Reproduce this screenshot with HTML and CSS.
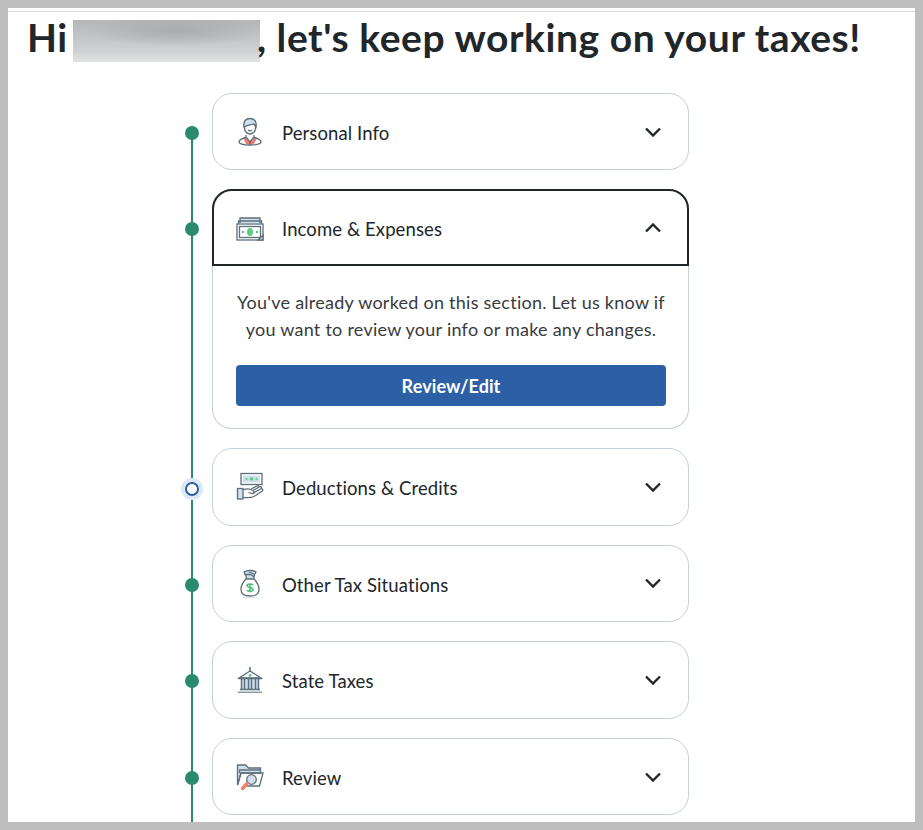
FILE: index.html
```html
<!DOCTYPE html>
<html lang="en">
<head>
  <meta charset="UTF-8" />
  <meta name="viewport" content="width=device-width, initial-scale=1.0"/>
  <title>Taxes</title>
  <link rel="stylesheet" href="styles.css">
</head>
<body>
  <div class="frame">
    <div class="page">

      <h1 class="greeting">Hi <span class="blurred-name"></span>, let's keep working on your taxes!</h1>

      <div class="steps">

        <!-- Personal Info -->
        <div class="step">
          <span class="dot"></span>
          <div class="card">
            <div class="card-head">
              <svg class="icon" viewBox="0 0 28 30">
                <path class="fill-coral" d="M9 20l5 5 5-5 2 1-3 6h-8l-3-6z"/>
                <path class="line" d="M8.500 8v3c0 3.500 2.500 6 5.500 6s5.500-2.500 5.500-6V8"/>
                <path class="fill-blue line" d="M8 10C7 4 10 1.500 14 1.500S21 4 20 10c-1-2-2-3-3-3-2 1-6 1-9 3z"/>
                <path class="line" d="M12 13c1 1 3 1 4 0M10 18v2l4 5 4-5v-2"/>
                <path class="line" d="M10 20.500c-4 1-7 3-7 4.500s4 3 11 3 11-1.500 11-3-3-3.500-7-4.500M14 25v3"/>
              </svg>
              <span class="label">Personal Info</span>
              <svg class="chevron" viewBox="0 0 18 10"><path d="M2 1.500l7 7 7-7"/></svg>
            </div>
          </div>
        </div>

        <!-- Income & Expenses, open -->
        <div class="step">
          <span class="dot"></span>
          <div class="card open">
            <div class="card-head">
              <svg class="icon" viewBox="0 0 28 30">
                <path class="fill-blue line" d="M4 10V5h20v5"/>
                <path class="line" d="M2.500 11V8h23v3"/>
                <rect class="line" x="1" y="11" width="26" height="16"/>
                <rect class="line" x="3.500" y="13.500" width="21" height="11"/>
                <ellipse class="fill-green" cx="14" cy="19" rx="3" ry="4"/>
                <circle class="fill-green" cx="7" cy="19" r="1.300"/>
                <circle class="fill-green" cx="21" cy="19" r="1.300"/>
                <path class="fill-blue line" d="M22 27l5-5v5z"/>
              </svg>
              <span class="label">Income &amp; Expenses</span>
              <svg class="chevron" viewBox="0 0 18 10"><path d="M2 8.500l7-7 7 7"/></svg>
            </div>
            <div class="card-body">
              <p>You've already worked on this section. Let us know if you want to review your info or make any changes.</p>
              <button class="review-btn">Review/Edit</button>
            </div>
          </div>
        </div>

        <!-- Deductions & Credits, current step -->
        <div class="step">
          <span class="dot current"></span>
          <div class="card">
            <div class="card-head">
              <svg class="icon" viewBox="0 0 28 30">
                <rect class="line" x="5" y="1.500" width="21" height="11"/>
                <rect class="fill-blue" x="7" y="3.500" width="17" height="7"/>
                <circle class="fill-green" cx="15.500" cy="7" r="1.800"/>
                <circle class="fill-green" cx="10.500" cy="7" r="1.100"/>
                <circle class="fill-green" cx="20.500" cy="7" r="1.100"/>
                <rect class="fill-blue line" x="1.500" y="16.500" width="5.500" height="10.500"/>
                <path class="line" d="M7 18c3-1.500 5-1.500 7.500-.5l3 1.500c1.500 1 .5 3-1.500 2.500l-3.500-1"/>
                <path class="line" d="M16.500 21.500l8-4.500c2-1 3 1 1.500 2.200L18 24.500c-3 1.500-6 1.500-11 .8"/>
                <path class="line" d="M17 18.500l6-3.500c1.500-1 3 0 2 1.500M15 17l6-3c1.500-.7 2.500.3 2 1"/>
              </svg>
              <span class="label">Deductions &amp; Credits</span>
              <svg class="chevron" viewBox="0 0 18 10"><path d="M2 1.500l7 7 7-7"/></svg>
            </div>
          </div>
        </div>

        <!-- Other Tax Situations -->
        <div class="step">
          <span class="dot"></span>
          <div class="card">
            <div class="card-head">
              <svg class="icon" viewBox="0 0 28 30">
                <path class="fill-blue line" d="M8 4c3-2 9-2 12 0l-2 4c-.5 1-.5 2 0 3h-8c.5-1 .5-2 0-3z"/>
                <path class="line" d="M8.500 6.500h6l4 2.500M13 4l5 2"/>
                <path class="line" d="M10 11c-3 3-5 6.500-5 10.500 0 4.500 3 6.500 9 6.500s9-2 9-6.500c0-4-2-7.500-5-10.500"/>
                <path class="fill-blue" d="M7 29h14v.8H7z"/>
                <path class="dollar" d="M17 17c-1-1.500-6-1.500-6 .5 0 2.500 6 1.500 6 4.300 0 2-5 2-6 .4M14 15.300v9"/>
              </svg>
              <span class="label">Other Tax Situations</span>
              <svg class="chevron" viewBox="0 0 18 10"><path d="M2 1.500l7 7 7-7"/></svg>
            </div>
          </div>
        </div>

        <!-- State Taxes -->
        <div class="step">
          <span class="dot"></span>
          <div class="card">
            <div class="card-head">
              <svg class="icon" viewBox="0 0 28 30">
                <path class="line thick" d="M14 2v5"/>
                <path class="line" d="M3 13L14 6l11 7z"/>
                <circle class="fill-green" cx="14" cy="10.500" r="1.400"/>
                <rect class="fill-blue" x="5" y="14" width="18" height="10"/>
                <path class="line thick" d="M5.500 14v10M8.500 14v10M12.500 14v10M15.500 14v10M19.500 14v10M22.500 14v10"/>
                <path class="line thick" d="M2.500 13.500h23M4 24.500h20"/>
                <path class="fill-slate" d="M2 26.500h24V28H2z"/>
              </svg>
              <span class="label">State Taxes</span>
              <svg class="chevron" viewBox="0 0 18 10"><path d="M2 1.500l7 7 7-7"/></svg>
            </div>
          </div>
        </div>

        <!-- Review -->
        <div class="step">
          <span class="dot"></span>
          <div class="card">
            <div class="card-head">
              <svg class="icon" viewBox="0 0 28 30">
                <path class="fill-blue line" d="M1.500 23V3h8l3 3h12v5H5z"/>
                <path class="line" d="M3.500 11V8h21"/>
                <path class="line" d="M1.500 23L5 11h22l-3.500 13H8"/>
                <circle class="fill-blue line" cx="15.500" cy="17.500" r="4.800"/>
                <path class="coral-line" d="M11 21.500L6.500 26.500"/>
              </svg>
              <span class="label">Review</span>
              <svg class="chevron" viewBox="0 0 18 10"><path d="M2 1.500l7 7 7-7"/></svg>
            </div>
          </div>
        </div>

      </div>
    </div>
  </div>
</body>
</html>
```

FILE: styles.css
```css
body {
  margin: 0;
  font-family: "Lato", "Liberation Sans", sans-serif;
  background-color: white;
  color: #21262a;
}

.frame {
  box-sizing: border-box;
  width: 923px;
  height: 830px;
  border: 8px solid #bdbdbd;
  overflow: hidden;
}

.page {
  margin-top: 3px;
  border-top: 1px solid #d4dbe0;
  height: 100%;
}

.greeting {
  margin: 0;
  padding: 2px 0 0 19px;
  height: 80.750px;
  box-sizing: border-box;
  font-size: 39px;
  line-height: 46px;
  font-weight: 700;
  letter-spacing: 0.570px;
  white-space: nowrap;
}

.blurred-name {
  display: inline-block;
  vertical-align: -10px;
  width: 187px;
  height: 42px;
  margin-left: -5px;
  margin-right: -3px;
  background:
    radial-gradient(ellipse 90px 16px at 55% 25%, #a9abac, rgba(169,171,172,0)),
    linear-gradient(#b4b6b8, #d0d1d2 75%, #e2e3e3);
}

/* timeline */
.steps {
  position: relative;
  display: flex;
  flex-direction: column;
  gap: 19px;
  padding-left: 177px;
}
.steps::before {
  content: "";
  position: absolute;
  top: 40px;
  bottom: -400px;
  left: 183px;
  width: 2px;
  background-color: #2a8a6e;
}

.step {
  position: relative;
  display: flex;
  align-items: flex-start;
  gap: 13px;
}

.dot {
  flex: none;
  box-sizing: border-box;
  width: 14px;
  height: 14px;
  margin-top: 33px;
  border-radius: 50%;
  background-color: #2a8a6e;
}
.dot.current {
  margin-top: 34px;
  background-color: white;
  border: 2px solid #2d5fa5;
  box-shadow: 0 0 0 4px #dfe8f7;
}

/* cards */
.card {
  box-sizing: border-box;
  width: 477px;
  border: 1px solid #c5d0d8;
  border-radius: 20px;
  background: white;
}

.card-head {
  display: flex;
  align-items: center;
  height: 75.600px;
  padding: 0 26.500px 0 23px;
}

.card.open {
  border-top: none;
}
.card.open .card-head {
  box-sizing: border-box;
  height: 77px;
  margin: 0 -1px;
  padding: 0 25.500px 0 22px;
  border: 2px solid #21262a;
  border-radius: 20px 20px 0 0;
}

.icon {
  flex: none;
  width: 28px;
  height: 30px;
}
.label {
  flex: 1;
  margin-left: 18px;
  padding-top: 3px;
  font-size: 18.500px;
  letter-spacing: 0.1px;
}
.chevron {
  flex: none;
  width: 18px;
  height: 10px;
}
.chevron path {
  fill: none;
  stroke: #21262a;
  stroke-width: 2.4;
}

/* icon parts */
.icon path, .icon rect, .icon circle, .icon ellipse {
  fill: none;
}
.icon .line {
  stroke: #5c6f7a;
  stroke-width: 1.3;
}
.icon .thick {
  stroke-width: 1.5;
}
.icon .fill-blue {
  fill: #cfe0ec;
}
.icon .fill-green {
  fill: #5cc98a;
}
.icon .fill-coral {
  fill: #f0806e;
}
.icon .fill-slate {
  fill: #8a9aa4;
}
.icon .coral-line {
  stroke: #f0806e;
  stroke-width: 3.4;
  stroke-linecap: round;
}
.icon .dollar {
  stroke: #4cbb7c;
  stroke-width: 1.5;
}

/* open section */
.card-body {
  padding: 23px 22px 21.600px 23px;
  text-align: center;
}
.card-body p {
  margin: 0 -6px 22px;
  font-size: 18px;
  letter-spacing: 0.250px;
  line-height: 27px;
  color: #393a3d;
}
.review-btn {
  display: block;
  width: 100%;
  height: 41px;
  border: none;
  border-radius: 4px;
  background-color: #2d5fa5;
  color: white;
  font-family: inherit;
  font-size: 18px;
  letter-spacing: 0.1px;
  font-weight: 700;
}
```
